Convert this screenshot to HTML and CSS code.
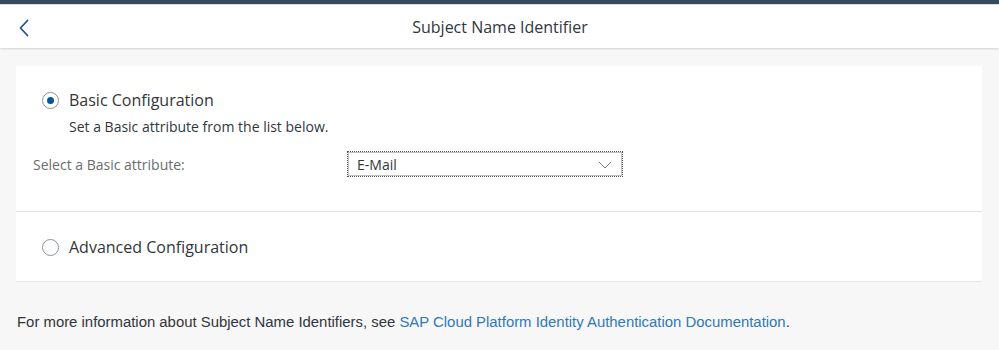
FILE: index.html
```html
<!DOCTYPE html>
<html>
<head>
<meta charset="utf-8">
<link rel="stylesheet" href="styles.css">
</head>
<body>
<div class="topbar"></div>
<header class="header">
  <button class="back" aria-label="Back">
    <svg width="12" height="18" viewBox="0 0 12 18"><path d="M9.5 1.5 L2.5 9 L9.5 16.5" fill="none" stroke="#24528a" stroke-width="1.8" stroke-linecap="round" stroke-linejoin="round"/></svg>
  </button>
  <h1 class="title">Subject Name Identifier</h1>
</header>
<main class="content">
  <section class="card">
    <div class="block basic">
      <label class="radio-row">
        <span class="radio checked"><span class="dot"></span></span>
        <span class="radio-label">Basic Configuration</span>
      </label>
      <p class="hint">Set a Basic attribute from the list below.</p>
      <div class="field">
        <span class="field-label">Select a Basic attribute:</span>
        <div class="select">
          <span class="select-value">E-Mail</span>
          <svg class="chev" width="14" height="8" viewBox="0 0 14 8"><path d="M1 1 L7 7 L13 1" fill="none" stroke="#7b7f83" stroke-width="1"/></svg>
        </div>
      </div>
    </div>
    <div class="block advanced">
      <label class="radio-row">
        <span class="radio"></span>
        <span class="radio-label">Advanced Configuration</span>
      </label>
    </div>
  </section>
  <p class="footer-note">For more information about Subject Name Identifiers, see <a href="#" class="link">SAP Cloud Platform Identity Authentication Documentation</a>.</p>
</main>
</body>
</html>
```

FILE: styles.css
```css
* { box-sizing: border-box; }
html, body { margin: 0; padding: 0; }
body {
  background: #f7f7f7;
  font-family: "Open Sans", "Noto Sans", sans-serif;
  color: #32363a;
  width: 999px;
  height: 350px;
  overflow: hidden;
}
.topbar {
  background: #354a5f;
  border-bottom: 1px solid #eadcd8;
  height: 5px;
}
.header {
  height: 43px;
  background: #fff;
  box-shadow: 0 1px 2px rgba(0,0,0,0.15);
  display: flex;
  align-items: center;
  justify-content: center;
  position: relative;
}
.back {
  position: absolute;
  left: 18px;
  top: 14px;
  border: 0;
  background: none;
  padding: 0;
  display: flex;
}
.title {
  margin: 0 0 0 1px;
  font-size: 16px;
  font-weight: 400;
  color: #32363a;
}
.content {
  padding: 18px 17px 0 16px;
}
.card {
  background: #fff;
  width: 966px;
}
.block { padding: 0 0 0 26px; }
.basic {
  padding-top: 24px;
  height: 146px;
  border-bottom: 1px solid #e1e1e1;
}
.advanced {
  height: 70px;
  padding-top: 25px;
  border-bottom: 1px solid #e5e5e5;
}
.radio-row {
  display: flex;
  align-items: center;
  height: 20px;
}
.radio {
  width: 17px;
  height: 17px;
  border: 1px solid #89919a;
  border-radius: 50%;
  display: flex;
  align-items: center;
  justify-content: center;
  margin-right: 10px;
  background: #fff;
}
.dot {
  width: 7px;
  height: 7px;
  border-radius: 50%;
  background: #0854a0;
}
.radio-label {
  font-size: 16px;
  color: #32363a;
}
.hint {
  margin: 7px 0 0 27px;
  font-size: 14px;
  line-height: 19px;
  color: #32363a;
}
.field {
  display: flex;
  align-items: center;
  margin-top: 15px;
  margin-left: -9px;
}
.field-label {
  width: 314px;
  font-size: 14px;
  color: #6a6d70;
}
.select {
  width: 276px;
  height: 26px;
  border: 1px dotted #555;
  outline: 1px solid #bfbfbf;
  outline-offset: -2px;
  display: flex;
  align-items: center;
  justify-content: space-between;
  padding: 0 10px 0 9px;
  background: #fff;
}
.select-value {
  font-size: 14px;
  color: #32363a;
}
.chev { margin-top: 1px; }
.footer-note {
  margin: 32px 0 0 1px;
  font-family: "Liberation Sans", Arial, sans-serif;
  font-size: 14.9px;
  color: #32363a;
}
.link {
  color: #2e7ab8;
  text-decoration: none;
}
```
